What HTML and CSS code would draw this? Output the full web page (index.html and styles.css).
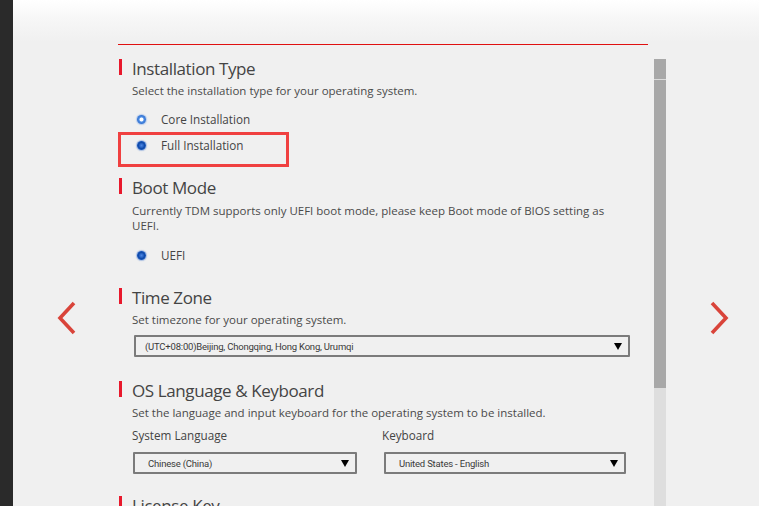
FILE: index.html
```html
<!DOCTYPE html>
<html>
<head>
<meta charset="utf-8">
<link rel="stylesheet" href="styles.css">
</head>
<body>
<div class="sidebar"></div>
<div class="main">
  <div class="nav nav-left">
    <svg class="chev" width="24" height="34" viewBox="0 0 24 34"><polyline points="19,2 5,17 19,32" fill="none" stroke="#d9443a" stroke-width="3.6"/></svg>
  </div>
  <div class="content">
    <section class="sec sec1">
      <h2 class="title">Installation Type</h2>
      <p class="desc">Select the installation type for your operating system.</p>
      <div class="opt first"><span class="radio"></span><span class="lbl">Core Installation</span></div>
      <div class="opt-box"><div class="opt inner"><span class="radio on"></span><span class="lbl">Full Installation</span></div></div>
    </section>
    <section class="sec sec2">
      <h2 class="title">Boot Mode</h2>
      <p class="desc wide">Currently TDM supports only UEFI boot mode, please keep Boot mode of BIOS setting as UEFI.</p>
      <div class="opt uefi"><span class="radio on"></span><span class="lbl">UEFI</span></div>
    </section>
    <section class="sec sec3">
      <h2 class="title">Time Zone</h2>
      <p class="desc">Set timezone for your operating system.</p>
      <div class="select tz"><span class="val">(UTC+08:00)Beijing, Chongqing, Hong Kong, Urumqi</span><span class="arrow"></span></div>
    </section>
    <section class="sec sec4">
      <h2 class="title">OS Language &amp; Keyboard</h2>
      <p class="desc">Set the language and input keyboard for the operating system to be installed.</p>
      <div class="pair">
        <div class="field f1">
          <div class="flabel">System Language</div>
          <div class="select lang"><span class="val">Chinese (China)</span><span class="arrow"></span></div>
        </div>
        <div class="field f2">
          <div class="flabel">Keyboard</div>
          <div class="select kb"><span class="val">United States - English</span><span class="arrow"></span></div>
        </div>
      </div>
    </section>
    <section class="sec sec5">
      <h2 class="title">License Key</h2>
    </section>
  </div>
  <div class="scrollbar">
    <div class="thumb"><div class="thumb-top"></div><div class="thumb-rest"></div></div>
    <div class="track"></div>
  </div>
  <div class="nav nav-right">
    <svg class="chev" width="24" height="34" viewBox="0 0 24 34"><polyline points="5,2 19,17 5,32" fill="none" stroke="#d9443a" stroke-width="3.6"/></svg>
  </div>
</div>
</body>
</html>
```
FILE: styles.css
```css
* { box-sizing: border-box; }
html, body { margin: 0; padding: 0; }
body {
  width: 759px;
  height: 506px;
  overflow: hidden;
  display: flex;
  background: #f0f0f0;
  font-family: "Open Sans", "DejaVu Sans", sans-serif;
  color: #444;
}
.sidebar { width: 13px; flex: none; background: #2a2a2a; }
.main {
  flex: 1;
  display: flex;
  height: 506px;
  overflow: hidden;
  background: linear-gradient(to bottom, #ffffff 0px, #f7f7f7 18px, #f0f0f0 42px);
}
.nav { flex: none; }
.nav-left { width: 105px; padding: 301px 0 0 42px; }
.nav-right { width: 93px; padding: 301px 0 0 41px; }
.chev { display: block; }

.content {
  width: 530px;
  flex: none;
  margin-top: 44px;
  border-top: 1px solid #e01010;
}
.sec { margin: 0; }
.title {
  margin: 0 0 0 1px;
  border-left: 3px solid #e8192c;
  padding-left: 10px;
  height: 16px;
  line-height: 19px;
  font-size: 17px;
  font-weight: 400;
  color: #444;
  letter-spacing: -0.4px;
  white-space: nowrap;
}
.desc {
  margin: 8px 0 0 14px;
  font-size: 11.5px;
  line-height: 15px;
  color: #4a4a4a;
}
.desc.wide { width: 490px; margin-top: 9px; }
.sec1 { margin-top: 14px; }
.sec2 { margin-top: 11px; }
.sec3 { margin-top: 23px; }
.sec4 { margin-top: 24px; }
.sec5 { margin-top: 22px; }

.opt {
  display: flex;
  align-items: center;
  height: 20px;
  padding-left: 19px;
  font-size: 11.7px;
  color: #444;
}
.opt.first { margin-top: 11px; }
.opt.uefi { margin-top: 12px; }
.opt-box {
  margin-top: 3px;
  width: 171px;
  height: 35px;
  border: 3px solid #f04040;
}
.opt.inner { padding-left: 16px; }
.radio {
  width: 9px;
  height: 9px;
  border-radius: 50%;
  flex: none;
  background: radial-gradient(circle, #ffffff 0, #ffffff 1.6px, #4f8fe6 2.4px, #2f6fd0 4.5px);
  box-shadow: 0 0 1px 1px rgba(80, 140, 230, 0.35);
}
.radio.on {
  background: radial-gradient(circle, #4a86e0 0, #2c66c8 1.8px, #0f4aa8 3px, #1a58c0 4.5px);
  box-shadow: 0 0 1px 1px rgba(40, 100, 200, 0.35);
}
.lbl { margin-left: 15px; }

.select {
  display: flex;
  align-items: center;
  height: 22px;
  border: 2px solid #7b7b7b;
  border-radius: 1px;
  padding: 0 5px 0 9px;
  font-family: "Roboto", "Liberation Sans", sans-serif;
  font-size: 9.5px;
  color: #3a3a3a;
}
.select .val { flex: 1; letter-spacing: -0.2px; }
.arrow {
  width: 0;
  height: 0;
  border-left: 4px solid transparent;
  border-right: 4px solid transparent;
  border-top: 7px solid #000;
  margin-right: 1px;
}
.tz { margin: 8px 0 0 16px; width: 496px; }
.pair { display: flex; margin-top: 8px; margin-left: 14px; }
.field.f1 { width: 250px; }
.field.f2 { width: 250px; }
.flabel { font-size: 11.7px; line-height: 15px; color: #444; }
.select.lang { margin: 9px 0 0 1px; width: 224px; }
.select.kb { margin: 9px 0 0 2px; width: 242px; }
.select.lang .val, .select.kb .val { padding-left: 4px; }

.scrollbar {
  flex: none;
  width: 12px;
  margin: 59px 0 0 6px;
  display: flex;
  flex-direction: column;
}
.thumb { height: 329px; flex: none; display: flex; flex-direction: column; }
.thumb-top { height: 21px; background: #a8a8a8; border-bottom: 1px solid #dcdcdc; }
.thumb-rest { flex: 1; background: #a8a8a8; }
.track { flex: 1; background: #dedede; }
```
